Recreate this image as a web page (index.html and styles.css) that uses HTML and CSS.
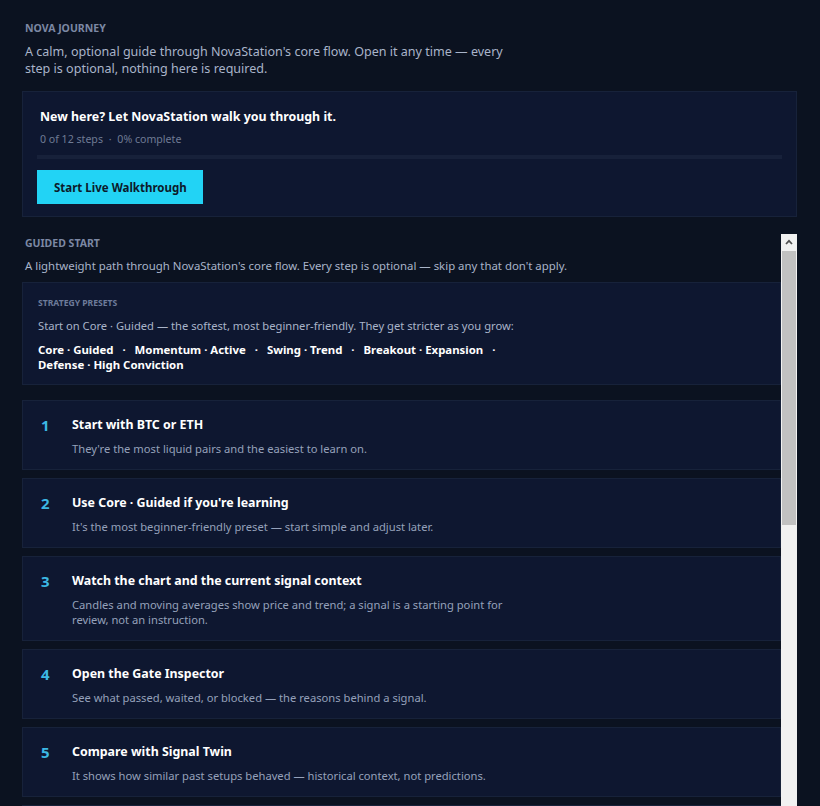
FILE: index.html
```html
<!DOCTYPE html>
<html lang="en">

<head>
    <meta charset="UTF-8">
    <meta name="viewport" content="width=device-width, initial-scale=1.0">
    <title>Nova Journey</title>
    <link rel="stylesheet" href="styles.css">
</head>

<body>
    <section class="journey">
        <h2 class="label">Nova Journey</h2>
        <p class="intro">A calm, optional guide through NovaStation's core flow. Open it any time &mdash; every
            step is optional, nothing here is required.</p>

        <div class="card walkthrough">
            <h3 class="walk-title">New here? Let NovaStation walk you through it.</h3>
            <div class="walk-meta">0 of 12 steps <span class="dot">&middot;</span> 0% complete</div>
            <div class="progress"><div class="progress-fill" style="width: 0%"></div></div>
            <button class="btn-start">Start Live Walkthrough</button>
        </div>
    </section>

    <div class="guided-frame">
        <section class="guided">
            <h2 class="label">Guided Start</h2>
            <p class="guided-sub">A lightweight path through NovaStation's core flow. Every step is optional &mdash; skip any that don't apply.</p>

            <div class="card presets">
                <h4 class="presets-label">Strategy Presets</h4>
                <p class="presets-text">Start on Core &middot; Guided &mdash; the softest, most beginner-friendly. They get stricter as you grow:</p>
                <p class="presets-list">
                    Core &middot; Guided <span class="sep">&middot;</span>
                    Momentum &middot; Active <span class="sep">&middot;</span>
                    Swing &middot; Trend <span class="sep">&middot;</span>
                    Breakout &middot; Expansion <span class="sep">&middot;</span>
                    Defense &middot; High Conviction
                </p>
            </div>

            <ol class="steps">
                <li class="card step">
                    <span class="step-num">1</span>
                    <div>
                        <h4 class="step-title">Start with BTC or ETH</h4>
                        <p class="step-desc">They're the most liquid pairs and the easiest to learn on.</p>
                    </div>
                </li>
                <li class="card step">
                    <span class="step-num">2</span>
                    <div>
                        <h4 class="step-title">Use Core &middot; Guided if you're learning</h4>
                        <p class="step-desc">It's the most beginner-friendly preset &mdash; start simple and adjust later.</p>
                    </div>
                </li>
                <li class="card step">
                    <span class="step-num">3</span>
                    <div>
                        <h4 class="step-title">Watch the chart and the current signal context</h4>
                        <p class="step-desc">Candles and moving averages show price and trend; a signal is a starting point for review, not an instruction.</p>
                    </div>
                </li>
                <li class="card step">
                    <span class="step-num">4</span>
                    <div>
                        <h4 class="step-title">Open the Gate Inspector</h4>
                        <p class="step-desc">See what passed, waited, or blocked &mdash; the reasons behind a signal.</p>
                    </div>
                </li>
                <li class="card step">
                    <span class="step-num">5</span>
                    <div>
                        <h4 class="step-title">Compare with Signal Twin</h4>
                        <p class="step-desc">It shows how similar past setups behaved &mdash; historical context, not predictions.</p>
                    </div>
                </li>
                <li class="card step">
                    <span class="step-num">6</span>
                    <div>
                        <h4 class="step-title">Check the risk panel</h4>
                        <p class="step-desc">Position size and stop distance are shown before anything else.</p>
                    </div>
                </li>
                <li class="card step">
                    <span class="step-num">7</span>
                    <div>
                        <h4 class="step-title">Try Paper Mode first</h4>
                        <p class="step-desc">Practice with a simulated balance &mdash; nothing real is at stake.</p>
                    </div>
                </li>
                <li class="card step">
                    <span class="step-num">8</span>
                    <div>
                        <h4 class="step-title">Set a daily loss limit</h4>
                        <p class="step-desc">A simple guardrail that pauses new entries once it's reached.</p>
                    </div>
                </li>
            </ol>
        </section>

        <!-- scroll track for the guided list -->
        <div class="scrollbar">
            <span class="sb-btn">
                <svg width="8" height="6" viewBox="0 0 8 6"><path d="M1 5 4 1.8 7 5" fill="none" stroke="#505050" stroke-width="1.7"/></svg>
            </span>
            <span class="sb-thumb"></span>
        </div>
    </div>
</body>

</html>
```

FILE: styles.css
```css
/* Base */
html,
body {
    height: 100%;
    overflow: hidden;
}

body {
    margin: 0;
    padding: 21px 23px 0 22px;
    background-color: #0b1220;
    color: #a9b4c9;
    font-family: "Noto Sans", "Open Sans", sans-serif;
}

h2,
h3,
h4,
p {
    margin: 0;
}

.label {
    padding-left: 3px;
    font-size: 10.5px;
    line-height: 14px;
    font-weight: 700;
    text-transform: uppercase;
    color: #7c88a4;
}

.card {
    background-color: #0e1730;
    border: 1px solid #17223a;
}

/* Nova journey */
.intro {
    max-width: 490px;
    margin-top: 8px;
    padding-left: 3px;
    font-size: 12.55px;
    line-height: 17px;
}

.walkthrough {
    margin-top: 14px;
    padding: 16px 14px 12px;
}

.walk-title {
    padding-left: 3px;
    font-size: 12.4px;
    line-height: 17px;
    color: #fff;
}

.walk-meta {
    margin-top: 7px;
    padding-left: 3px;
    font-size: 10.6px;
    line-height: 14px;
    color: #6f7b94;
}

.walk-meta .dot {
    margin: 0 3px;
}

.progress {
    height: 4px;
    margin-top: 9px;
    background-color: #17213a;
}

.progress-fill {
    height: 100%;
    background-color: #22d3ee;
}

.btn-start {
    display: block;
    margin-top: 11px;
    height: 34px;
    padding: 0 16px 0 17px;
    background-color: #22d3f5;
    color: #0c1a2b;
    border: none;
    font-family: inherit;
    font-size: 11.5px;
    font-weight: 700;
    cursor: pointer;
}

.btn-start:hover {
    background-color: #1bbfe0;
}

.guided-frame {
    display: grid;
    grid-template-columns: 1fr 16px;
    height: 600px;
    margin-top: 17px;
}

.guided {
    min-width: 0;
    overflow: hidden;
    padding-top: 2px;
}

.scrollbar {
    display: flex;
    flex-direction: column;
    background-color: #f1f1f1;
}

.sb-btn {
    height: 16px;
    display: flex;
    align-items: center;
    justify-content: center;
}

.sb-thumb {
    height: 274px;
    margin: 1px 1px 0;
    background-color: #c1c1c1;
}

.guided-sub {
    margin-top: 8px;
    padding-left: 3px;
    font-size: 11.4px;
    line-height: 15px;
}

.presets {
    margin-top: 9px;
    padding: 14px 15px 12px;
}

.presets-label {
    font-size: 8.6px;
    line-height: 12px;
    font-weight: 700;
    text-transform: uppercase;
    color: #6d7b9a;
}

.presets-text {
    margin-top: 9px;
    font-size: 11.2px;
    line-height: 15px;
}

.presets-list {
    max-width: 470px;
    margin-top: 9px;
    font-size: 11.4px;
    line-height: 15px;
    font-weight: 700;
    color: #fff;
}

.presets-list .sep {
    margin: 0 6px;
}

.steps {
    list-style: none;
    margin: 15px 0 0;
    padding: 0;
    display: flex;
    flex-direction: column;
    gap: 8px;
}

.step {
    display: grid;
    grid-template-columns: 31px 1fr;
    padding: 15px 16px 13px 18px;
}

.step-num {
    font-size: 15px;
    line-height: 19px;
    font-weight: 700;
    color: #3cb8e4;
}

.step-title {
    font-size: 12.4px;
    line-height: 17px;
    color: #fff;
}

.step-desc {
    max-width: 440px;
    margin-top: 8px;
    font-size: 11.2px;
    line-height: 15px;
    color: #95a1ba;
}
```
